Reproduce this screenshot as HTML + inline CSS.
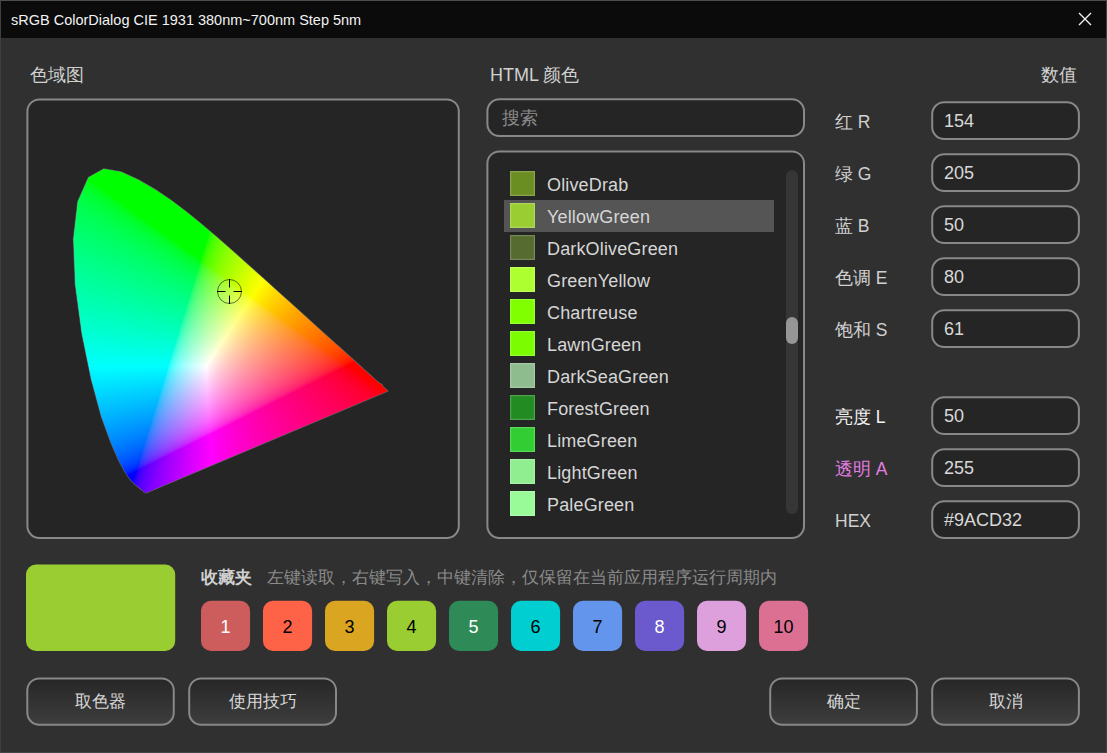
<!DOCTYPE html>
<html><head><meta charset="utf-8">
<style>
html,body{margin:0;padding:0;}
body{width:1107px;height:753px;overflow:hidden;position:relative;background:#303030;font-family:"Liberation Sans",sans-serif;color:#d4d4d4;}
.a{position:absolute;}
#win{left:0;top:0;width:1105px;height:751px;border:1px solid #404040;border-top-color:#4e4e4e;border-bottom-color:#444;}
#title{left:1px;top:1px;width:1105px;height:37px;background:#0b0b0b;}
#ttext{left:11px;top:12px;font-size:14.5px;line-height:17px;color:#f2f2f2;white-space:nowrap;}
.lbl{font-size:18px;color:#d0d0d0;white-space:nowrap;line-height:20px;}
.fv{left:944px;font-size:18px;color:#d8d8d8;line-height:20px;white-space:nowrap;}
.rl{left:835px;font-size:17.5px;color:#d0d0d0;line-height:20px;white-space:nowrap;}
.sw{left:510px;width:25px;height:25px;box-sizing:border-box;border:1px solid rgba(255,255,255,0.2);box-shadow:inset 0 0 0 1px rgba(255,255,255,0.05);}
.it{left:547px;font-size:18px;color:#d6d6d6;line-height:20px;white-space:nowrap;letter-spacing:0.15px;}
.fav{top:600.8px;width:49.1px;height:50.1px;font-size:18px;text-align:center;line-height:52px;}
.btn{top:678.4px;height:46.3px;font-size:17px;color:#d8d8d8;text-align:center;line-height:48px;padding-left:1px;box-sizing:border-box;}
</style></head><body>
<div class="a" id="win"></div>
<div class="a" id="title"></div>
<div class="a" id="ttext">sRGB ColorDialog CIE 1931 380nm~700nm Step 5nm</div>
<svg class="a" style="left:1078px;top:12px" width="14" height="14" viewBox="0 0 14 14"><path d="M1 1L13 13M13 1L1 13" stroke="#f0f0f0" stroke-width="1.4"/></svg>
<div class="a lbl" style="left:30px;top:65px;font-size:17.5px">色域图</div>
<div class="a lbl" style="left:490px;top:65px">HTML 颜色</div>
<div class="a lbl" style="left:1041px;top:65px;font-size:17.5px">数值</div>
<svg class="a" style="left:0;top:0" width="1107" height="753"><defs><linearGradient id="bg" x1="0" y1="0" x2="0" y2="1"><stop offset="0" stop-color="#262626"/><stop offset="1" stop-color="#3e3e3e"/></linearGradient></defs><rect x="27.40" y="99.40" width="431.40" height="438.60" rx="12" fill="#252525" stroke="#888888" stroke-width="2"/><rect x="487.40" y="99.30" width="316.60" height="36.70" rx="12" fill="#252525" stroke="#888888" stroke-width="2"/><rect x="487.40" y="151.40" width="316.60" height="386.60" rx="12" fill="#252525" stroke="#888888" stroke-width="2"/><rect x="932.20" y="102.30" width="146.70" height="36.70" rx="12" fill="#252525" stroke="#888888" stroke-width="2"/><rect x="932.20" y="154.30" width="146.70" height="36.70" rx="12" fill="#252525" stroke="#888888" stroke-width="2"/><rect x="932.20" y="206.30" width="146.70" height="36.70" rx="12" fill="#252525" stroke="#888888" stroke-width="2"/><rect x="932.20" y="258.30" width="146.70" height="36.70" rx="12" fill="#252525" stroke="#888888" stroke-width="2"/><rect x="932.20" y="310.30" width="146.70" height="36.70" rx="12" fill="#252525" stroke="#888888" stroke-width="2"/><rect x="932.20" y="397.30" width="146.70" height="36.70" rx="12" fill="#252525" stroke="#888888" stroke-width="2"/><rect x="932.20" y="449.30" width="146.70" height="36.70" rx="12" fill="#252525" stroke="#888888" stroke-width="2"/><rect x="932.20" y="501.30" width="146.70" height="36.70" rx="12" fill="#252525" stroke="#888888" stroke-width="2"/><rect x="27.30" y="678.40" width="146.45" height="46.30" rx="12" fill="url(#bg)" stroke="#888888" stroke-width="2"/><rect x="189.20" y="678.40" width="146.80" height="46.30" rx="12" fill="url(#bg)" stroke="#888888" stroke-width="2"/><rect x="770.20" y="678.40" width="146.70" height="46.30" rx="12" fill="url(#bg)" stroke="#888888" stroke-width="2"/><rect x="932.20" y="678.40" width="146.70" height="46.30" rx="12" fill="url(#bg)" stroke="#888888" stroke-width="2"/><rect x="26" y="564.6" width="149.2" height="86.4" rx="10" fill="#9ACD32"/><rect x="201.0" y="600.8" width="49.1" height="50.1" rx="10" fill="#CD5C5C"/><rect x="263.0" y="600.8" width="49.1" height="50.1" rx="10" fill="#FF6347"/><rect x="325.0" y="600.8" width="49.1" height="50.1" rx="10" fill="#DAA520"/><rect x="387.0" y="600.8" width="49.1" height="50.1" rx="10" fill="#9ACD32"/><rect x="449.0" y="600.8" width="49.1" height="50.1" rx="10" fill="#2E8B57"/><rect x="511.0" y="600.8" width="49.1" height="50.1" rx="10" fill="#00CED1"/><rect x="573.0" y="600.8" width="49.1" height="50.1" rx="10" fill="#6495ED"/><rect x="635.0" y="600.8" width="49.1" height="50.1" rx="10" fill="#6A5ACD"/><rect x="697.0" y="600.8" width="49.1" height="50.1" rx="10" fill="#DDA0DD"/><rect x="759.0" y="600.8" width="49.1" height="50.1" rx="10" fill="#DB7093"/></svg>
<div class="a" style="left:60px;top:160px;width:340px;height:340px;clip-path:polygon(86.7px 332.5px, 86.7px 332.5px, 86.6px 332.6px, 86.5px 332.6px, 86.3px 332.6px, 86.2px 332.6px, 86.0px 332.6px, 85.8px 332.6px, 85.5px 332.5px, 85.1px 332.2px, 84.5px 331.8px, 83.6px 331.1px, 82.5px 330.2px, 81.1px 329.1px, 79.2px 327.6px, 76.8px 325.6px, 73.8px 322.9px, 70.1px 318.9px, 65.2px 311.9px, 59.0px 300.6px, 51.1px 282.7px, 41.4px 256.2px, 31.4px 219.4px, 22.0px 173.4px, 15.4px 124.4px, 13.6px 78.9px, 17.9px 41.7px, 28.6px 17.6px, 43.8px 9.1px, 61.0px 12.0px, 78.4px 20.0px, 94.8px 29.4px, 110.5px 40.1px, 126.1px 51.8px, 141.5px 64.3px, 156.8px 77.3px, 172.2px 90.8px, 187.5px 104.4px, 202.7px 118.0px, 217.6px 131.5px, 232.1px 144.6px, 245.9px 157.1px, 259.0px 168.9px, 270.9px 179.7px, 281.3px 189.1px, 290.4px 197.3px, 297.9px 204.1px, 304.1px 209.7px, 309.0px 214.2px, 312.9px 217.7px, 316.0px 220.5px, 318.6px 222.9px, 322.0px 224.9px, 322.5px 226.4px, 323.8px 227.6px, 324.8px 228.5px, 325.5px 229.1px, 326.0px 229.5px, 326.4px 229.9px, 326.7px 230.2px, 327.0px 230.4px, 327.2px 230.7px, 327.4px 230.8px, 327.5px 230.9px, 327.5px 231.0px);background:radial-gradient(circle at 146.2px 206.1px, #fff 0, rgba(255,255,255,0.55) 22px, rgba(255,255,255,0) 80px), conic-gradient(from 0deg at 146.2px 206.1px, #20ff00 0deg, #ffff00 33.6deg, #ff0000 97.8deg, #ff00ff 177deg, #0000ff 213.7deg, #00ffff 269.8deg, #00ff40 340deg, #20ff00 360deg)"></div>
<canvas class="a" id="cie" style="left:60px;top:160px" width="340" height="340"></canvas>
<div class="a lbl" style="left:502px;top:108px;color:#8a8a8a">搜索</div>
<div class="a" style="left:504px;top:200px;width:270px;height:32px;background:#555555"></div>
<div class="a" style="left:786px;top:170px;width:12px;height:344px;border-radius:6px;background:#363636"></div>
<div class="a" style="left:786px;top:317px;width:12px;height:27px;border-radius:6px;background:#969696"></div>
<div class="a sw" style="top:171px;background:#6B8E23"></div><div class="a it" style="top:175px">OliveDrab</div>
<div class="a sw" style="top:203px;background:#9ACD32"></div><div class="a it" style="top:207px">YellowGreen</div>
<div class="a sw" style="top:235px;background:#556B2F"></div><div class="a it" style="top:239px">DarkOliveGreen</div>
<div class="a sw" style="top:267px;background:#ADFF2F"></div><div class="a it" style="top:271px">GreenYellow</div>
<div class="a sw" style="top:299px;background:#7FFF00"></div><div class="a it" style="top:303px">Chartreuse</div>
<div class="a sw" style="top:331px;background:#7CFC00"></div><div class="a it" style="top:335px">LawnGreen</div>
<div class="a sw" style="top:363px;background:#8FBC8F"></div><div class="a it" style="top:367px">DarkSeaGreen</div>
<div class="a sw" style="top:395px;background:#228B22"></div><div class="a it" style="top:399px">ForestGreen</div>
<div class="a sw" style="top:427px;background:#32CD32"></div><div class="a it" style="top:431px">LimeGreen</div>
<div class="a sw" style="top:459px;background:#90EE90"></div><div class="a it" style="top:463px">LightGreen</div>
<div class="a sw" style="top:491px;background:#98FB98"></div><div class="a it" style="top:495px">PaleGreen</div>

<div class="a rl" style="top:112.0px;">红 R</div><div class="a fv" style="top:110.5px">154</div>
<div class="a rl" style="top:164.0px;">绿 G</div><div class="a fv" style="top:162.5px">205</div>
<div class="a rl" style="top:216.0px;">蓝 B</div><div class="a fv" style="top:214.5px">50</div>
<div class="a rl" style="top:268.0px;">色调 E</div><div class="a fv" style="top:266.5px">80</div>
<div class="a rl" style="top:320.0px;">饱和 S</div><div class="a fv" style="top:318.5px">61</div>
<div class="a rl" style="top:407.0px;color:#f4f4f4">亮度 L</div><div class="a fv" style="top:405.5px">50</div>
<div class="a rl" style="top:459.0px;color:#e07ee0">透明 A</div><div class="a fv" style="top:457.5px">255</div>
<div class="a rl" style="top:511.0px;">HEX</div><div class="a fv" style="top:509.5px">#9ACD32</div>

<div class="a lbl" style="left:201px;top:568px;color:#cfcfcf;font-size:17px;font-weight:bold">收藏夹</div>
<div class="a lbl" style="left:267px;top:568px;color:#8a8a8a;font-size:17px">左键读取，右键写入，中键清除，仅保留在当前应用程序运行周期内</div>
<div class="a fav" style="left:201.0px;color:#fff">1</div><div class="a fav" style="left:263.0px;color:#000">2</div><div class="a fav" style="left:325.0px;color:#000">3</div><div class="a fav" style="left:387.0px;color:#000">4</div><div class="a fav" style="left:449.0px;color:#fff">5</div><div class="a fav" style="left:511.0px;color:#000">6</div><div class="a fav" style="left:573.0px;color:#000">7</div><div class="a fav" style="left:635.0px;color:#fff">8</div><div class="a fav" style="left:697.0px;color:#000">9</div><div class="a fav" style="left:759.0px;color:#000">10</div>
<div class="a btn" style="left:27.3px;width:146.4px">取色器</div><div class="a btn" style="left:189.2px;width:146.8px">使用技巧</div><div class="a btn" style="left:770.2px;width:146.7px">确定</div><div class="a btn" style="left:932.2px;width:146.7px">取消</div>
<script>
(function(){
var L=[0.1741,0.0050,0.1740,0.0050,0.1738,0.0049,0.1736,0.0049,0.1733,0.0048,0.1730,0.0048,0.1726,0.0048,0.1721,0.0048,0.1714,0.0051,0.1703,0.0058,0.1689,0.0069,0.1669,0.0086,0.1644,0.0109,0.1611,0.0138,0.1566,0.0177,0.1510,0.0227,0.1440,0.0297,0.1355,0.0399,0.1241,0.0578,0.1096,0.0868,0.0913,0.1327,0.0687,0.2007,0.0454,0.2950,0.0235,0.4127,0.0082,0.5384,0.0039,0.6548,0.0139,0.7502,0.0389,0.8120,0.0743,0.8338,0.1142,0.8262,0.1547,0.8059,0.1929,0.7816,0.2296,0.7543,0.2658,0.7243,0.3016,0.6923,0.3373,0.6589,0.3731,0.6245,0.4087,0.5896,0.4441,0.5547,0.4788,0.5202,0.5125,0.4866,0.5448,0.4544,0.5752,0.4242,0.6029,0.3965,0.6270,0.3725,0.6482,0.3514,0.6658,0.3340,0.6801,0.3197,0.6915,0.3083,0.7006,0.2993,0.7079,0.2920,0.7140,0.2859,0.7219,0.2809,0.7230,0.2770,0.7260,0.2740,0.7283,0.2717,0.7300,0.2700,0.7311,0.2689,0.7320,0.2680,0.7327,0.2673,0.7334,0.2666,0.7340,0.2660,0.7344,0.2656,0.7346,0.2654,0.7347,0.2653];
var cv=document.getElementById('cie');var W=cv.width,H=cv.height;
var OX=60,OY=160,AX=71.9,SX=429.6,AY=494.5,SY=390.3;
var off=document.createElement('canvas');off.width=W;off.height=H;
var oc=off.getContext('2d');var im=oc.createImageData(W,H);var d=im.data;
function g(c){return c<=0.0031308?12.92*c:1.055*Math.pow(c,1/2.4)-0.055;}
for(var j=0;j<H;j++){for(var i=0;i<W;i++){
 var X=OX+i+0.5,Y=OY+j+0.5;var x=(X-AX)/SX,y=(AY-Y)/SY;if(y<=0.001)y=0.001;
 var Xc=x/y,Yc=1,Zc=(1-x-y)/y;
 var r=3.2406*Xc-1.5372*Yc-0.4986*Zc,gg=-0.9689*Xc+1.8758*Yc+0.0415*Zc,b=0.0557*Xc-0.2040*Yc+1.0570*Zc;
 if(r<0)r=0;if(gg<0)gg=0;if(b<0)b=0;var m=Math.max(r,gg,b);if(m<=0)m=1;r/=m;gg/=m;b/=m;
 var k=(j*W+i)*4;d[k]=Math.round(255*g(r));d[k+1]=Math.round(255*g(gg));d[k+2]=Math.round(255*g(b));d[k+3]=255;}}
oc.putImageData(im,0,0);
var c=cv.getContext('2d');c.save();c.beginPath();
for(var n=0;n<L.length;n+=2){var px=AX+SX*L[n]-OX,py=AY-SY*L[n+1]-OY;if(n==0)c.moveTo(px,py);else c.lineTo(px,py);}
c.closePath();c.strokeStyle='rgba(150,150,150,0.5)';c.lineWidth=1.5;c.stroke();c.clip();c.drawImage(off,0,0);c.restore();
// crosshair
var cx=229.5-OX,cy=291.5-OY;c.strokeStyle='rgba(0,0,0,0.55)';c.lineWidth=1;c.beginPath();c.arc(cx,cy,12,0,Math.PI*2);c.stroke();
c.strokeStyle='#000';c.beginPath();c.moveTo(cx-12.5,cy);c.lineTo(cx-4,cy);c.moveTo(cx+4,cy);c.lineTo(cx+12.5,cy);c.moveTo(cx,cy-12.5);c.lineTo(cx,cy-4);c.moveTo(cx,cy+4);c.lineTo(cx,cy+12.5);c.stroke();
})();
</script>
</body></html>
